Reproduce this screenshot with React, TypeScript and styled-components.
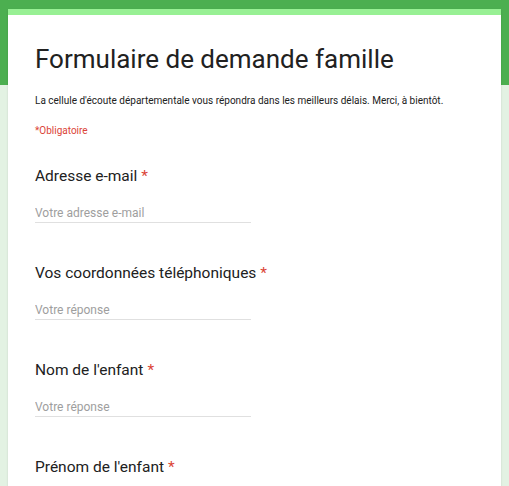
import React from "react";
import styled, { createGlobalStyle } from "styled-components";

const Global = createGlobalStyle`
  html, body { margin: 0; padding: 0; }
  body {
    font-family: Roboto, "Noto Sans", Arial, sans-serif;
    background: #e3f2e3;
    overflow: hidden;
  }
`;

const Page = styled.div`
  height: 100vh;
  overflow: hidden;
  background: linear-gradient(to bottom, #4caf50 0, #4caf50 85px, #e3f2e3 85px);
  padding: 9px 8px 0;
  box-sizing: border-box;
`;

const Card = styled.main`
  background: #fff;
  border-top: 6px solid #98f094;
  padding: 27px 27px 40px;
  min-height: 600px;
  box-shadow: 0 1px 2px rgba(0, 0, 0, 0.12);
`;

const Title = styled.h1`
  margin: 0;
  font-size: 26px;
  line-height: 34px;
  font-weight: 400;
  color: #212121;
`;

const Description = styled.p`
  margin: 18px 0 0;
  font-size: 10px;
  line-height: 14px;
  color: #212121;
`;

const Required = styled.div`
  margin-top: 16px;
  font-size: 10px;
  line-height: 14px;
  color: #db4437;
`;

const Question = styled.section`
  margin-top: 28px;
  & + & { margin-top: 40px; }
`;

const Label = styled.div`
  font-size: 15.5px;
  line-height: 20px;
  color: #212121;
`;

const Star = styled.span`
  color: #db4437;
  margin-left: 4px;
`;

const Input = styled.input`
  display: block;
  margin-top: 18px;
  width: 216px;
  height: 17px;
  padding: 0 0 1px;
  box-sizing: content-box;
  border: none;
  border-bottom: 1px solid #e0e0e0;
  font-family: inherit;
  font-size: 12px;
  line-height: 16px;
  color: #212121;
  outline: none;
  background: transparent;
  &::placeholder { color: #9e9e9e; }
`;

const questions = [
  { label: "Adresse e-mail", placeholder: "Votre adresse e-mail" },
  { label: "Vos coordonnées téléphoniques", placeholder: "Votre réponse" },
  { label: "Nom de l'enfant", placeholder: "Votre réponse" },
  { label: "Prénom de l'enfant", placeholder: "Votre réponse" },
];

export default function App() {
  return (
    <>
      <Global />
      <Page>
        <Card>
          <Title>Formulaire de demande famille</Title>
          <Description>
            La cellule d'écoute départementale vous répondra dans les meilleurs délais. Merci, à bientôt.
          </Description>
          <Required>*Obligatoire</Required>
          {questions.map((q) => (
            <Question key={q.label}>
              <Label>
                {q.label}
                <Star>*</Star>
              </Label>
              <Input placeholder={q.placeholder} />
            </Question>
          ))}
        </Card>
      </Page>
    </>
  );
}
